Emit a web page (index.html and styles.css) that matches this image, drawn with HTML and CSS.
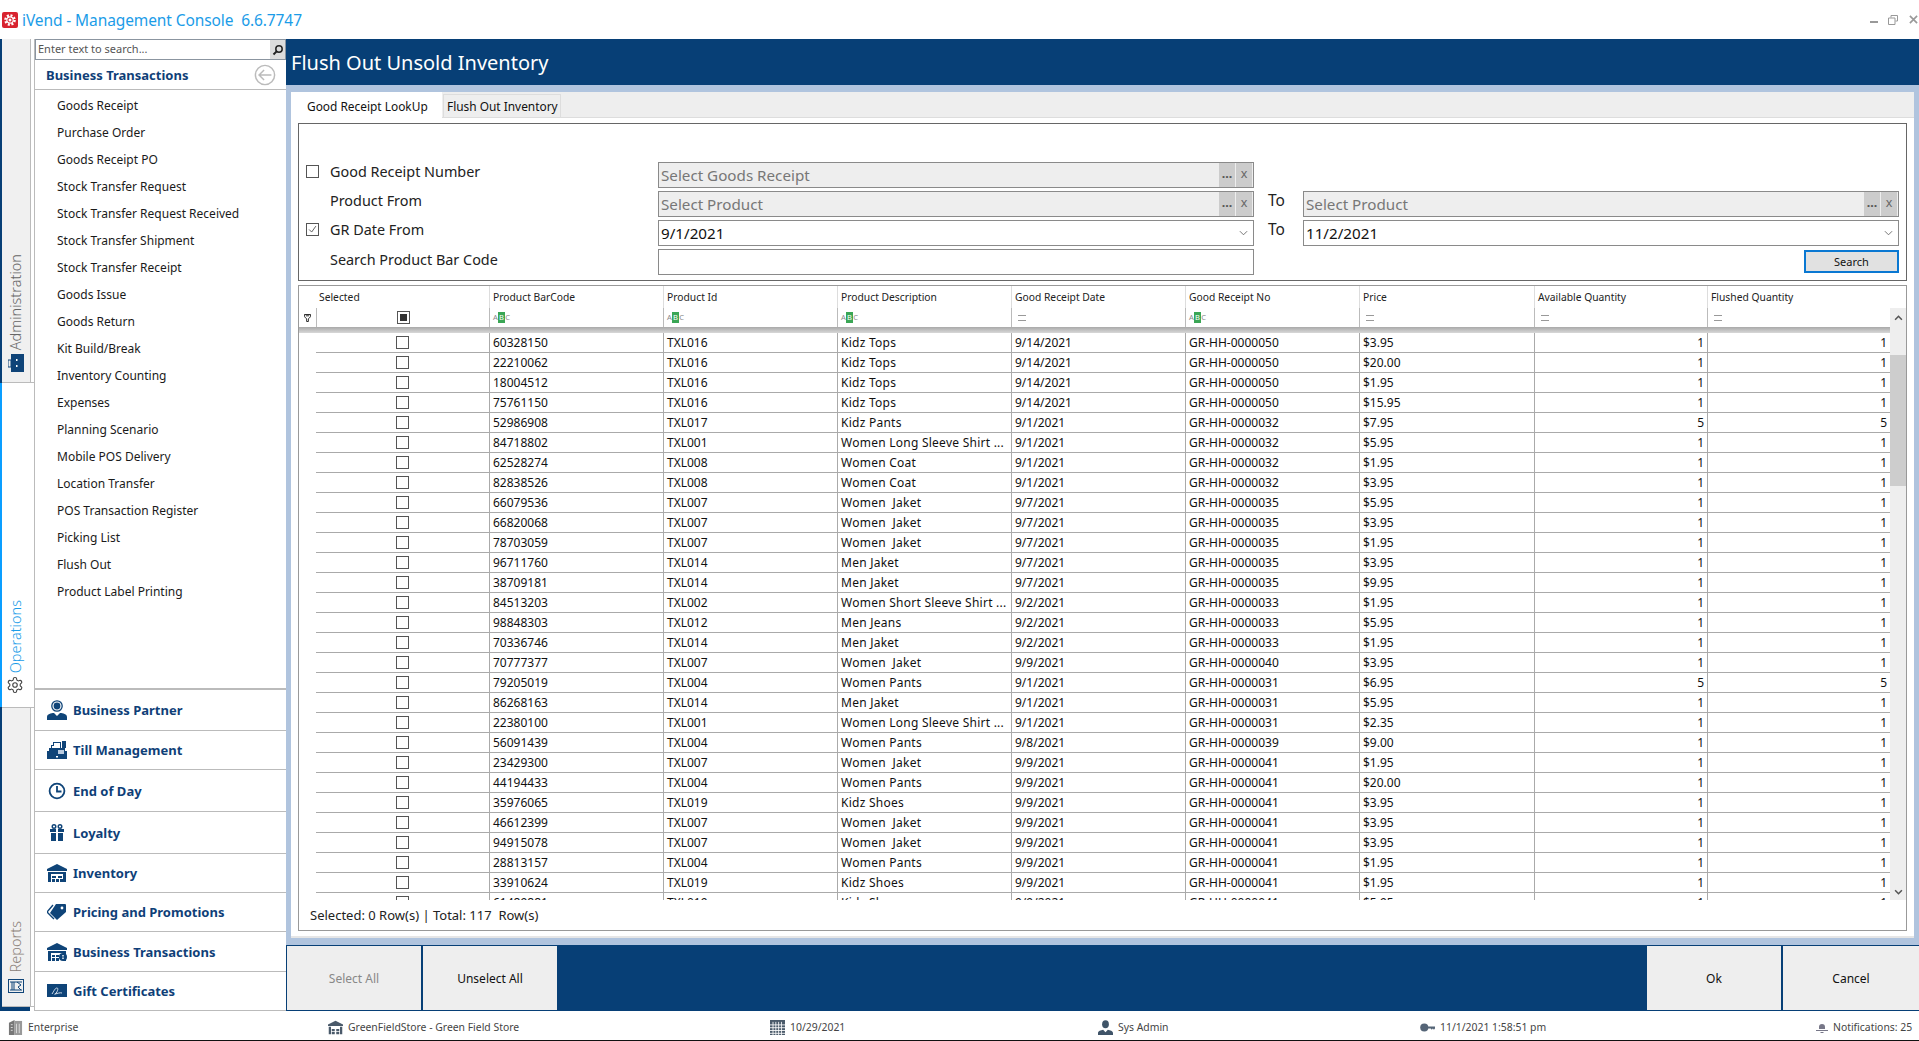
FILE: index.html
```html
<!DOCTYPE html>
<html lang="en">
<head>
<meta charset="utf-8">
<title>iVend - Management Console</title>
<link rel="stylesheet" href="styles.css">
</head>
<body>
<div class="app">
  <header class="titlebar">
    <svg class="logo" viewBox="0 0 16 16"><rect width="16" height="16" rx="2" fill="#d8232f"/><circle cx="8" cy="8" r="4.6" fill="none" stroke="#fff" stroke-width="2.4" stroke-dasharray="2 1.6"/><circle cx="8" cy="8" r="3.2" fill="none" stroke="#fff" stroke-width="1.2"/><circle cx="8" cy="8" r="1.5" fill="#fff"/></svg>
    <span class="app-name">iVend - Management Console&nbsp; 6.6.7747</span>
    <div class="win-controls">
      <span class="win-min"></span>
      <svg class="win-icon" viewBox="0 0 10 10"><path d="M3 2.5V.5h6.5v5.5H7.5M.5 3h6.5v6.5H.5z" fill="none" stroke="#999" stroke-width="1"/></svg>
      <svg class="win-icon win-close" viewBox="0 0 10 10"><path d="M1 1l8 8M9 1l-8 8" stroke="#999" stroke-width="1.8"/></svg>
    </div>
  </header>

  <div class="main">
    <nav class="rail">
      <div class="rail-tab tab-admin">
        <span class="rail-text">Administration</span>
        <svg class="rail-icon" viewBox="0 0 16 18"><rect x="3" y="0" width="13" height="18" fill="#0f4478"/><rect x="0" y="6" width="3" height="7" fill="none" stroke="#0f4478"/><rect x="8" y="5" width="1.5" height="2" fill="#fff"/><rect x="8" y="11" width="1.5" height="2" fill="#fff"/></svg>
      </div>
      <div class="rail-tab tab-active">
        <span class="rail-text">Operations</span>
        <svg class="rail-icon gear" viewBox="0 0 24 24"><path d="M12.22 2h-.44a2 2 0 0 0-2 2v.18a2 2 0 0 1-1 1.73l-.43.25a2 2 0 0 1-2 0l-.15-.08a2 2 0 0 0-2.73.73l-.22.38a2 2 0 0 0 .73 2.73l.15.1a2 2 0 0 1 1 1.72v.51a2 2 0 0 1-1 1.74l-.15.09a2 2 0 0 0-.73 2.73l.22.38a2 2 0 0 0 2.73.73l.15-.08a2 2 0 0 1 2 0l.43.25a2 2 0 0 1 1 1.73V20a2 2 0 0 0 2 2h.44a2 2 0 0 0 2-2v-.18a2 2 0 0 1 1-1.73l.43-.25a2 2 0 0 1 2 0l.15.08a2 2 0 0 0 2.73-.73l.22-.39a2 2 0 0 0-.73-2.73l-.15-.08a2 2 0 0 1-1-1.74v-.5a2 2 0 0 1 1-1.74l.15-.09a2 2 0 0 0 .73-2.73l-.22-.38a2 2 0 0 0-2.73-.73l-.15.08a2 2 0 0 1-2 0l-.43-.25a2 2 0 0 1-1-1.73V4a2 2 0 0 0-2-2z" fill="none" stroke="#444" stroke-width="1.5"/><circle cx="12" cy="12" r="3" fill="none" stroke="#444" stroke-width="1.5"/></svg>
      </div>
      <div class="rail-tab tab-reports">
        <span class="rail-text">Reports</span>
        <svg class="rail-icon" viewBox="0 0 16 14"><rect x=".5" y=".5" width="15" height="13" fill="none" stroke="#0f4478"/><path d="M2 3h12M2 11h12M4 3v8M6 3v8" stroke="#0f4478" stroke-width="1"/><path d="M9 3l4 3-3 2 3 3" fill="none" stroke="#0f4478"/></svg>
      </div>
      <div class="rail-end"></div>
    </nav>

    <aside class="sidebar">
      <div class="search">
        <span class="search-text">Enter text to search...</span>
        <span class="search-btn"><svg viewBox="0 0 12 12" class="search-icon"><circle cx="7" cy="5" r="3.2" fill="none" stroke="#222" stroke-width="1.5"/><path d="M4.6 7.4L1.5 10.5" stroke="#222" stroke-width="2"/></svg></span>
      </div>
      <div class="side-head">
        <span class="side-title">Business Transactions</span>
        <svg class="back-icon" viewBox="0 0 24 24"><circle cx="12" cy="12" r="10.5" fill="none" stroke="#bbb" stroke-width="1.6"/><path d="M19 12H6M11 6.5L5.5 12l5.5 5.5" fill="none" stroke="#bbb" stroke-width="1.6"/></svg>
      </div>
      <ul class="side-list">
        <li>Goods Receipt</li>
        <li>Purchase Order</li>
        <li>Goods Receipt PO</li>
        <li>Stock Transfer Request</li>
        <li>Stock Transfer Request Received</li>
        <li>Stock Transfer Shipment</li>
        <li>Stock Transfer Receipt</li>
        <li>Goods Issue</li>
        <li>Goods Return</li>
        <li>Kit Build/Break</li>
        <li>Inventory Counting</li>
        <li>Expenses</li>
        <li>Planning Scenario</li>
        <li>Mobile POS Delivery</li>
        <li>Location Transfer</li>
        <li>POS Transaction Register</li>
        <li>Picking List</li>
        <li>Flush Out</li>
        <li>Product Label Printing</li>
      </ul>
      <div class="nav-group">
        <div class="nav-row h41"><svg class="nav-icon" viewBox="0 0 20 20"><circle cx="10" cy="6" r="5.2" fill="none" stroke="#0f4478" stroke-width="1.3"/><circle cx="10" cy="6" r="3.4" fill="#0f4478"/><path d="M0 20v-3c0-3 4-4 7-4l3 3 3-3c3 0 7 1 7 4v3z" fill="#0f4478"/></svg><span>Business Partner</span></div>
        <div class="nav-row h39"><svg class="nav-icon" viewBox="0 0 20 20"><path d="M4 8V5h2V2h8v6h-1V3H7v3H5v2zM15 1h4v7h-4z" fill="#0f4478"/><path d="M0 19v-8h2V8h16v3h2v8z" fill="#0f4478"/><rect x="11" y="10" width="6" height="4" fill="#b9cbe0"/><rect x="9" y="16" width="2" height="1.5" fill="#fff"/></svg><span>Till Management</span></div>
        <div class="nav-row h42"><svg class="nav-icon" viewBox="0 0 20 20"><circle cx="10" cy="10" r="7.4" fill="none" stroke="#0f4478" stroke-width="1.8"/><path d="M10 5v5.5h4.5" fill="none" stroke="#0f4478" stroke-width="1.8"/></svg><span>End of Day</span></div>
        <div class="nav-row h42"><svg class="nav-icon" viewBox="0 0 20 20"><path d="M3 6h14v3H3zM4 10h12v8H4z" fill="#0f4478"/><circle cx="7" cy="3.5" r="1.8" fill="none" stroke="#0f4478" stroke-width="1.4"/><circle cx="13" cy="3.5" r="1.8" fill="none" stroke="#0f4478" stroke-width="1.4"/><path d="M9 6h2v12H9z" fill="#fff"/></svg><span>Loyalty</span></div>
        <div class="nav-row h39"><svg class="nav-icon" viewBox="0 0 20 20"><path d="M0 6l10-5 10 5v2H0z" fill="#0f4478"/><path d="M1 9h3v10H1zM16 9h3v10h-3zM4 9h12v2H4z" fill="#0f4478"/><path d="M5 13h4v2H5zM11 13h4v2h-4zM5 16h3v3H5zM9 16h3v3H9zM13 16h3v3h-3z" fill="#0f4478"/></svg><span>Inventory</span></div>
        <div class="nav-row h39"><svg class="nav-icon" viewBox="0 0 20 20"><path d="M9 2h9a1 1 0 0 1 1 1v7l-9 8-7-7z" fill="#0f4478"/><path d="M6 3L0 10l7 7" fill="none" stroke="#0f4478" stroke-width="1.4"/><circle cx="15" cy="6" r="1.4" fill="#fff"/></svg><span>Pricing and Promotions</span></div>
        <div class="nav-row h40"><svg class="nav-icon" viewBox="0 0 20 20"><path d="M0 6l10-5 10 5v2H0z" fill="#0f4478"/><path d="M1 9h3v10H1zM16 9h3v10h-3zM4 9h12v2H4z" fill="#0f4478"/><path d="M5 13h3v2H5zM9 13h3v2H9zM5 16h3v3H5zM9 16h3v3H9z" fill="#0f4478"/><circle cx="16" cy="15" r="4" fill="#0f4478"/><path d="M15 13.5h2M15 15h2M15 16.5h2" stroke="#fff" stroke-width=".7"/></svg><span>Business Transactions</span></div>
        <div class="nav-row h39"><svg class="nav-icon" viewBox="0 0 20 20"><rect y="3" width="20" height="13" fill="#0f4478"/><path d="M5 13c2-3 3-6 5-6s0 5-2 6 5-2 7-1" fill="none" stroke="#cfdcea" stroke-width="1"/></svg><span>Gift Certificates</span></div>
      </div>
    </aside>

    <main class="content">
      <h1 class="page-title">Flush Out Unsold Inventory</h1>
      <div class="page-body">
        <div class="panel">
          <div class="tabs">
            <span class="tab tab-on">Good Receipt LookUp</span>
            <span class="tab tab-off">Flush Out Inventory</span>
          </div>
          <section class="filters">
            <label class="f-label"><span class="cb cb-form"></span>Good Receipt Number</label>
            <div class="field field-off"><span class="field-text">Select Goods Receipt</span><span class="mini mini-dots">...</span><span class="mini">x</span></div>
            <span></span><span></span>

            <label class="f-label f-indent">Product From</label>
            <div class="field field-off"><span class="field-text">Select Product</span><span class="mini mini-dots">...</span><span class="mini">x</span></div>
            <span class="to">To</span>
            <div class="field field-off"><span class="field-text">Select Product</span><span class="mini mini-dots">...</span><span class="mini">x</span></div>

            <label class="f-label"><span class="cb cb-form cb-check"><svg viewBox="0 0 13 13"><path d="M2.5 6.5l3 3 5-7" fill="none" stroke="#555" stroke-width="1.1"/></svg></span>GR Date From</label>
            <div class="field"><span class="field-text">9/1/2021</span><svg class="chev" viewBox="0 0 10 6"><path d="M1 1l4 4 4-4" fill="none" stroke="#666" stroke-width="1"/></svg></div>
            <span class="to">To</span>
            <div class="field"><span class="field-text">11/2/2021</span><svg class="chev" viewBox="0 0 10 6"><path d="M1 1l4 4 4-4" fill="none" stroke="#666" stroke-width="1"/></svg></div>

            <label class="f-label f-indent f-last">Search Product Bar Code</label>
            <div class="field"></div>
            <span></span>
            <button class="search-action" type="button">Search</button>
          </section>

          <section class="gridbox">
            <div class="grid-main">
              <div class="grid-table">
                <div class="g-caps">
                  <span></span><span>Selected</span><span>Product BarCode</span><span>Product Id</span><span>Product Description</span><span>Good Receipt Date</span><span>Good Receipt No</span><span>Price</span><span>Available Quantity</span><span>Flushed Quantity</span>
                </div>
                <div class="g-filter">
                  <span class="g-funnel"><svg viewBox="0 0 8 9"><path d="M.5 .5h7v2.5L5 5.5v3H3v-3L.5 3z" fill="#fff" stroke="#111" stroke-width="1"/><path d="M2 2h4" stroke="#111"/></svg></span>
                  <span class="g-center"><span class="cb cb-all"></span></span>
                  <span class="abc"><i>A</i><b>B</b><i>C</i></span>
                  <span class="abc"><i>A</i><b>B</b><i>C</i></span>
                  <span class="abc"><i>A</i><b>B</b><i>C</i></span>
                  <span class="eq"></span>
                  <span class="abc"><i>A</i><b>B</b><i>C</i></span>
                  <span class="eq"></span>
                  <span class="eq"></span>
                  <span class="eq"></span>
                </div>
                <div class="g-thick"></div>
                <div class="g-body">
                  <div class="g-row"><span></span><span class="g-center"><span class="cb"></span></span><span>60328150</span><span>TXL016</span><span class="desc">Kidz Tops</span><span>9/14/2021</span><span>GR-HH-0000050</span><span>$3.95</span><span class="num">1</span><span class="num">1</span></div>
                  <div class="g-row"><span></span><span class="g-center"><span class="cb"></span></span><span>22210062</span><span>TXL016</span><span class="desc">Kidz Tops</span><span>9/14/2021</span><span>GR-HH-0000050</span><span>$20.00</span><span class="num">1</span><span class="num">1</span></div>
                  <div class="g-row"><span></span><span class="g-center"><span class="cb"></span></span><span>18004512</span><span>TXL016</span><span class="desc">Kidz Tops</span><span>9/14/2021</span><span>GR-HH-0000050</span><span>$1.95</span><span class="num">1</span><span class="num">1</span></div>
                  <div class="g-row"><span></span><span class="g-center"><span class="cb"></span></span><span>75761150</span><span>TXL016</span><span class="desc">Kidz Tops</span><span>9/14/2021</span><span>GR-HH-0000050</span><span>$15.95</span><span class="num">1</span><span class="num">1</span></div>
                  <div class="g-row"><span></span><span class="g-center"><span class="cb"></span></span><span>52986908</span><span>TXL017</span><span class="desc">Kidz Pants</span><span>9/1/2021</span><span>GR-HH-0000032</span><span>$7.95</span><span class="num">5</span><span class="num">5</span></div>
                  <div class="g-row"><span></span><span class="g-center"><span class="cb"></span></span><span>84718802</span><span>TXL001</span><span class="desc">Women Long Sleeve Shirt ...</span><span>9/1/2021</span><span>GR-HH-0000032</span><span>$5.95</span><span class="num">1</span><span class="num">1</span></div>
                  <div class="g-row"><span></span><span class="g-center"><span class="cb"></span></span><span>62528274</span><span>TXL008</span><span class="desc">Women Coat</span><span>9/1/2021</span><span>GR-HH-0000032</span><span>$1.95</span><span class="num">1</span><span class="num">1</span></div>
                  <div class="g-row"><span></span><span class="g-center"><span class="cb"></span></span><span>82838526</span><span>TXL008</span><span class="desc">Women Coat</span><span>9/1/2021</span><span>GR-HH-0000032</span><span>$3.95</span><span class="num">1</span><span class="num">1</span></div>
                  <div class="g-row"><span></span><span class="g-center"><span class="cb"></span></span><span>66079536</span><span>TXL007</span><span class="desc">Women  Jaket</span><span>9/7/2021</span><span>GR-HH-0000035</span><span>$5.95</span><span class="num">1</span><span class="num">1</span></div>
                  <div class="g-row"><span></span><span class="g-center"><span class="cb"></span></span><span>66820068</span><span>TXL007</span><span class="desc">Women  Jaket</span><span>9/7/2021</span><span>GR-HH-0000035</span><span>$3.95</span><span class="num">1</span><span class="num">1</span></div>
                  <div class="g-row"><span></span><span class="g-center"><span class="cb"></span></span><span>78703059</span><span>TXL007</span><span class="desc">Women  Jaket</span><span>9/7/2021</span><span>GR-HH-0000035</span><span>$1.95</span><span class="num">1</span><span class="num">1</span></div>
                  <div class="g-row"><span></span><span class="g-center"><span class="cb"></span></span><span>96711760</span><span>TXL014</span><span class="desc">Men Jaket</span><span>9/7/2021</span><span>GR-HH-0000035</span><span>$3.95</span><span class="num">1</span><span class="num">1</span></div>
                  <div class="g-row"><span></span><span class="g-center"><span class="cb"></span></span><span>38709181</span><span>TXL014</span><span class="desc">Men Jaket</span><span>9/7/2021</span><span>GR-HH-0000035</span><span>$9.95</span><span class="num">1</span><span class="num">1</span></div>
                  <div class="g-row"><span></span><span class="g-center"><span class="cb"></span></span><span>84513203</span><span>TXL002</span><span class="desc">Women Short Sleeve Shirt ...</span><span>9/2/2021</span><span>GR-HH-0000033</span><span>$1.95</span><span class="num">1</span><span class="num">1</span></div>
                  <div class="g-row"><span></span><span class="g-center"><span class="cb"></span></span><span>98848303</span><span>TXL012</span><span class="desc">Men Jeans</span><span>9/2/2021</span><span>GR-HH-0000033</span><span>$5.95</span><span class="num">1</span><span class="num">1</span></div>
                  <div class="g-row"><span></span><span class="g-center"><span class="cb"></span></span><span>70336746</span><span>TXL014</span><span class="desc">Men Jaket</span><span>9/2/2021</span><span>GR-HH-0000033</span><span>$1.95</span><span class="num">1</span><span class="num">1</span></div>
                  <div class="g-row"><span></span><span class="g-center"><span class="cb"></span></span><span>70777377</span><span>TXL007</span><span class="desc">Women  Jaket</span><span>9/9/2021</span><span>GR-HH-0000040</span><span>$3.95</span><span class="num">1</span><span class="num">1</span></div>
                  <div class="g-row"><span></span><span class="g-center"><span class="cb"></span></span><span>79205019</span><span>TXL004</span><span class="desc">Women Pants</span><span>9/1/2021</span><span>GR-HH-0000031</span><span>$6.95</span><span class="num">5</span><span class="num">5</span></div>
                  <div class="g-row"><span></span><span class="g-center"><span class="cb"></span></span><span>86268163</span><span>TXL014</span><span class="desc">Men Jaket</span><span>9/1/2021</span><span>GR-HH-0000031</span><span>$5.95</span><span class="num">1</span><span class="num">1</span></div>
                  <div class="g-row"><span></span><span class="g-center"><span class="cb"></span></span><span>22380100</span><span>TXL001</span><span class="desc">Women Long Sleeve Shirt ...</span><span>9/1/2021</span><span>GR-HH-0000031</span><span>$2.35</span><span class="num">1</span><span class="num">1</span></div>
                  <div class="g-row"><span></span><span class="g-center"><span class="cb"></span></span><span>56091439</span><span>TXL004</span><span class="desc">Women Pants</span><span>9/8/2021</span><span>GR-HH-0000039</span><span>$9.00</span><span class="num">1</span><span class="num">1</span></div>
                  <div class="g-row"><span></span><span class="g-center"><span class="cb"></span></span><span>23429300</span><span>TXL007</span><span class="desc">Women  Jaket</span><span>9/9/2021</span><span>GR-HH-0000041</span><span>$1.95</span><span class="num">1</span><span class="num">1</span></div>
                  <div class="g-row"><span></span><span class="g-center"><span class="cb"></span></span><span>44194433</span><span>TXL004</span><span class="desc">Women Pants</span><span>9/9/2021</span><span>GR-HH-0000041</span><span>$20.00</span><span class="num">1</span><span class="num">1</span></div>
                  <div class="g-row"><span></span><span class="g-center"><span class="cb"></span></span><span>35976065</span><span>TXL019</span><span class="desc">Kidz Shoes</span><span>9/9/2021</span><span>GR-HH-0000041</span><span>$3.95</span><span class="num">1</span><span class="num">1</span></div>
                  <div class="g-row"><span></span><span class="g-center"><span class="cb"></span></span><span>46612399</span><span>TXL007</span><span class="desc">Women  Jaket</span><span>9/9/2021</span><span>GR-HH-0000041</span><span>$3.95</span><span class="num">1</span><span class="num">1</span></div>
                  <div class="g-row"><span></span><span class="g-center"><span class="cb"></span></span><span>94915078</span><span>TXL007</span><span class="desc">Women  Jaket</span><span>9/9/2021</span><span>GR-HH-0000041</span><span>$3.95</span><span class="num">1</span><span class="num">1</span></div>
                  <div class="g-row"><span></span><span class="g-center"><span class="cb"></span></span><span>28813157</span><span>TXL004</span><span class="desc">Women Pants</span><span>9/9/2021</span><span>GR-HH-0000041</span><span>$1.95</span><span class="num">1</span><span class="num">1</span></div>
                  <div class="g-row"><span></span><span class="g-center"><span class="cb"></span></span><span>33910624</span><span>TXL019</span><span class="desc">Kidz Shoes</span><span>9/9/2021</span><span>GR-HH-0000041</span><span>$1.95</span><span class="num">1</span><span class="num">1</span></div>
                  <div class="g-row"><span></span><span class="g-center"><span class="cb"></span></span><span>61489881</span><span>TXL019</span><span class="desc">Kidz Shoes</span><span>9/9/2021</span><span>GR-HH-0000041</span><span>$5.95</span><span class="num">1</span><span class="num">1</span></div>
                </div>
              </div>
              <div class="scrollbar">
                <svg class="sb-arrow" viewBox="0 0 8 5"><path d="M1 4l3-3 3 3" fill="none" stroke="#555" stroke-width="1.4"/></svg>
                <div class="sb-thumb"></div>
                <svg class="sb-arrow sb-down" viewBox="0 0 8 5"><path d="M1 1l3 3 3-3" fill="none" stroke="#555" stroke-width="1.4"/></svg>
              </div>
            </div>
            <div class="grid-status">Selected: 0 Row(s) | Total: 117&nbsp; Row(s)</div>
          </section>
        </div>
      </div>
      <footer class="actions">
        <button class="act act-off" type="button">Select All</button>
        <button class="act" type="button">Unselect All</button>
        <span class="act-space"></span>
        <button class="act" type="button">Ok</button>
        <button class="act act-last" type="button">Cancel</button>
      </footer>
    </main>
  </div>

  <footer class="statusbar">
    <span class="st"><svg class="st-icon" viewBox="0 0 14 16"><path d="M0 3l6-3v16H0z" fill="#777"/><path d="M6 1h8v15H6z" fill="#999"/><path d="M2 5h2M2 8h2M2 11h2M8 4v10M11 4v10" stroke="#ddd" stroke-width="1"/></svg>Enterprise</span>
    <span class="st"><svg class="st-icon" viewBox="0 0 20 20"><path d="M0 6l10-5 10 5v2H0z" fill="#4a5a6a"/><path d="M1 9h3v10H1zM16 9h3v10h-3zM5 12h4v3H5zM11 12h4v3h-4zM5 16h4v3H5zM11 16h4v3h-4z" fill="#4a5a6a"/></svg>GreenFieldStore - Green Field Store</span>
    <span class="st"><svg class="st-icon" viewBox="0 0 16 16"><rect width="16" height="16" fill="#4a5a6a"/><path d="M3.2 2v14M6.2 2v14M9.2 2v14M12.2 2v14M0 5.2h16M0 8.2h16M0 11.2h16M0 14.2h16" stroke="#fff" stroke-width=".9"/></svg>10/29/2021</span>
    <span class="st"><svg class="st-icon" viewBox="0 0 16 16"><ellipse cx="8" cy="4.5" rx="3.6" ry="4.2" fill="#3f5468"/><path d="M0 16v-2c0-2 3-3 5.5-3.5L8 13l2.5-2.5C13 11 16 12 16 14v2z" fill="#3f5468"/></svg>Sys Admin</span>
    <span class="st"><svg class="st-icon" viewBox="0 0 14 10"><circle cx="4" cy="5" r="3.8" fill="#556577"/><path d="M6 4h8v2l-1 1-1-1-1 1-1-1H6z" fill="#556577"/></svg>11/1/2021 1:58:51 pm</span>
    <span class="st"><svg class="st-icon st-bell" viewBox="0 0 12 12"><path d="M3 6a3 3 0 0 1 6 0v2H3zM0 9h12v1H0z" fill="#778"/><path d="M4.5 11h3v1h-3z" fill="#778"/></svg>Notifications: 25</span>
  </footer>
</div>
</body>
</html>
```

FILE: styles.css
```css
* { box-sizing: border-box; }
html, body { margin: 0; padding: 0; background: #fff; }
body { font-family: "Noto Sans", "Open Sans", sans-serif; color: #111; }
button { font-family: inherit; cursor: default; }

.app { width: 1919px; height: 1041px; display: flex; flex-direction: column; overflow: hidden; }

/* title bar */
.titlebar { height: 39px; flex: none; display: flex; align-items: center; padding: 0 1px 0 2px; }
.logo { width: 16px; height: 16px; margin-right: 4px; }
.app-name { font-size: 15.5px; letter-spacing: -.1px; color: #1b9ce8; white-space: pre; }
.win-controls { margin-left: auto; display: flex; align-items: center; gap: 10px; }
.win-min { width: 8px; height: 2px; background: #999; margin-top: 5px; }
.win-icon { width: 10px; height: 10px; display: block; }
.win-close { width: 9px; height: 9px; margin-left: 1px; }

.main { height: 972px; flex: none; display: flex; }

/* left rail */
.rail { width: 35px; flex: none; display: flex; flex-direction: column; border-right: 1px solid #bbb; }
.rail-tab { display: flex; flex-direction: column; justify-content: flex-end; align-items: center; border-left: 2px solid #073f76; margin-right: 0; background: linear-gradient(to right, #f0f0f0 28px, #bbb 28px, #bbb 29px, #fff 29px); padding-right: 5px; }
.tab-admin { height: 344px; padding-bottom: 11px; gap: 4px; box-shadow: inset 0 -1px 0 #bbb; }
.tab-active { height: 324px; padding-bottom: 13px; gap: 3px; background: #fff; border-left-color: #0a9eff; }
.tab-reports { height: 300px; padding-bottom: 13px; gap: 6px; box-shadow: inset 0 1px 0 #bbb, inset 0 -1px 0 #bbb; }
.rail-end { height: 4px; background: linear-gradient(to right, #073f76 30px, #fff 30px); }
.rail-text { writing-mode: vertical-rl; transform: rotate(180deg); font-size: 14.5px; line-height: 16px; color: #666; font-weight: 300; margin-right: 2px; }
.tab-active .rail-text { color: #1b9ce8; }
.tab-reports .rail-text { color: #8a8078; }
.rail-icon { width: 16px; height: 16px; display: block; }
.tab-admin .rail-icon { height: 18px; }
.rail-icon.gear { width: 18px; height: 18px; margin-right: 2px; }

/* sidebar */
.sidebar { width: 251px; flex: none; display: flex; flex-direction: column; }
.search { height: 21px; flex: none; display: flex; border: 1px solid #8b95a0; }
.search-text { flex: 1; font-size: 11px; line-height: 17px; padding-left: 2px; color: #555; }
.search-btn { width: 15px; background: #dcdcdc; display: flex; align-items: center; justify-content: center; }
.search-icon { width: 12px; height: 12px; }
.side-head { height: 30px; flex: none; display: flex; align-items: center; justify-content: space-between; padding: 0 10px 0 11px; border-bottom: 1px solid #bbb; }
.side-title { font-size: 13px; font-weight: 700; color: #0f3f78; }
.back-icon { width: 22px; height: 22px; }
.side-list { list-style: none; margin: 0; padding: 2px 0 0 22px; flex: 1; }
.side-list li { height: 27px; line-height: 27px; font-size: 12px; color: #1a1a1a; white-space: nowrap; }
.nav-group { flex: none; border-top: 2px solid #bbb; }
.nav-row { display: flex; align-items: center; gap: 6px; padding-left: 12px; border-bottom: 1px solid #bbb; font-size: 13px; font-weight: 700; color: #0f3f78; }
.h39 { height: 39px; } .h40 { height: 40px; } .h41 { height: 41px; } .h42 { height: 42px; }
.nav-icon { width: 20px; height: 20px; flex: none; }

/* content */
.content { flex: 1; min-width: 0; display: flex; flex-direction: column; }
.page-title { margin: 0; height: 46px; flex: none; background: #073f76; color: #fff; font-size: 20px; font-weight: 400; line-height: 47px; padding-left: 5px; }
.page-body { height: 860px; flex: none; background: #b0c4de; padding: 7px 5px; }
.panel { height: 846px; background: #fff; padding: 0 7px; box-shadow: inset 0 -2px 0 #e6e6e6; }
.tabs { height: 26px; margin: 0 -7px 5px; display: flex; align-items: flex-start; background: linear-gradient(#eee 25px, #ddd 25px); }
.tab { font-size: 11.9px; white-space: nowrap; }
.tab-on { width: 151px; height: 26px; line-height: 28px; background: #fff; padding-left: 16px; }
.tab-off { width: 118px; height: 24px; line-height: 23px; margin: 2px 0 0 1px; padding-left: 3px; border: 1px solid #ddd; border-bottom: 0; }

/* filters */
.filters { height: 158px; border: 1px solid #666; padding-top: 38px; display: grid; grid-template-columns: 359px 596px 49px 596px; grid-auto-rows: 26px; row-gap: 3px; }
.f-label { display: flex; align-items: center; font-size: 14.4px; color: #222; padding: 0 0 8px 7px; gap: 11px; white-space: nowrap; }
.f-indent { padding-left: 31px; }
.f-last { padding-bottom: 5px; }
.field { border: 1px solid #8a8a8a; display: flex; align-items: center; font-size: 15.2px; background: #fff; padding: 0 1px; }
.field-off { background: #eee; color: #777; }
.field-text { flex: 1; padding-left: 1px; white-space: nowrap; }
.mini { width: 16px; height: 24px; background: #ccc; margin-left: 1px; color: #666; font-size: 12.5px; text-align: center; line-height: 22px; }
.mini-dots { font-weight: 700; color: #555; }
.chev { width: 9px; height: 6px; margin-right: 4px; }
.to { font-size: 15.5px; color: #222; padding: 0 0 8px 14px; display: flex; align-items: center; }
.search-action { justify-self: end; width: 95px; height: 23px; padding: 0; margin: 1px 0 0; background: #e1e1e1; border: 2px solid #0a78d2; font-size: 11px; color: #111; }

.cb { display: inline-block; width: 13px; height: 13px; border: 1px solid #555; background: #fff; flex: none; }
.cb-form svg { display: block; width: 11px; height: 11px; }

/* grid */
.gridbox { height: 646px; margin-top: 4px; border: 1px solid #999; display: flex; flex-direction: column; }
.grid-main { flex: none; height: 614px; display: flex; }
.grid-table { flex: none; width: 1591px; display: flex; flex-direction: column; }
.g-caps, .g-filter, .g-row { display: grid; grid-template-columns: 17px 173px 174px 174px 174px 174px 174px 175px 173px 183px; }
.g-caps { height: 22px; flex: none; font-size: 10.3px; line-height: 22px; color: #222; }
.g-caps span { padding-left: 3px; border-left: 1px solid #ddd; white-space: nowrap; overflow: hidden; }
.g-caps span:first-child, .g-caps span:nth-child(2) { border-left: 0; }
.g-filter { height: 19px; flex: none; }
.g-filter > span { border-left: 1px solid #bbb; display: flex; align-items: center; padding-left: 3px; }
.g-filter > .g-funnel { border-left: 0; padding-left: 5px; background: #fff; }
.g-funnel svg { width: 7px; height: 8px; }
.g-filter > .g-center, .g-center { justify-content: center; display: flex; align-items: center; padding: 0; }
.cb-all { background: #333; box-shadow: inset 0 0 0 2px #fff; }
.abc { font-size: 7.5px; line-height: 11px; }
.abc i { font-style: normal; color: #888; width: 5px; text-align: center; }
.abc b { font-weight: 400; background: #3aa655; color: #fff; width: 7px; height: 11px; text-align: center; }
.eq::after { content: ""; display: block; width: 8px; height: 4px; margin-left: 3px; border-top: 1px solid #999; border-bottom: 1px solid #999; }
.g-thick { height: 6px; flex: none; background: linear-gradient(#a9a9a9, #d8d8d8); }
.g-body { height: 567px; flex: none; overflow: hidden; }
.g-row { height: 20px; font-size: 12px; line-height: 19px; color: #111; white-space: pre; }
.g-row > span { border-left: 1px solid #aaa; border-bottom: 1px solid #aaa; padding-left: 3px; overflow: hidden; }
.g-row > span:first-child { border: 0; }
.g-row > span:nth-child(2) { border-left: 0; }
.g-row > .g-center { padding: 0 0 1px; }
.g-row > .num { text-align: right; padding: 0 3px 0 0; }
.desc { letter-spacing: .25px; }

.scrollbar { width: 16px; height: 592px; margin-top: 22px; background: #eee; display: flex; flex-direction: column; align-items: center; padding-top: 7px; }
.sb-arrow { width: 9px; height: 6px; flex: none; }
.sb-thumb { width: 100%; height: 131px; margin-top: 34px; background: #cdcdcd; flex: none; }
.sb-down { margin-top: auto; margin-bottom: 5px; }

.grid-status { flex: 1; font-size: 13px; padding: 6px 0 0 11px; color: #222; }

/* footer actions */
.actions { height: 66px; flex: none; background: #073f76; display: flex; padding: 1px 0 1px 1px; gap: 2px; }
.act { width: 134px; border: 0; padding: 0; background: #eee; font-size: 12px; color: #111; }
.act-off { color: #888; }
.act-space { flex: 1; }
.act-last { width: 136px; }

/* status bar */
.statusbar { height: 30px; flex: none; display: grid; grid-template-columns: 320px 442px 328px 322px 396px 1fr; padding: 3px 0 0 8px; border-bottom: 1px solid #111; font-size: 10.4px; color: #444; align-items: center; }
.st { display: flex; align-items: center; gap: 5px; white-space: nowrap; }
.st-icon { width: 15px; height: 15px; flex: none; }
.st-bell { width: 12px; height: 12px; }
```
